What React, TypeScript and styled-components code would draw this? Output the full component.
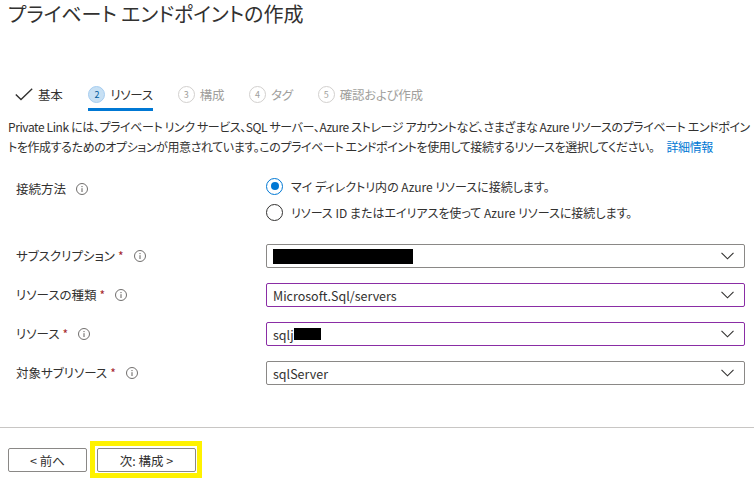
import styled, { createGlobalStyle } from "styled-components";

const GlobalStyle = createGlobalStyle`
  html, body {
    margin: 0;
    padding: 0;
    background: #ffffff;
  }
  body {
    font-family: "Noto Sans CJK JP", "Noto Sans", sans-serif;
    font-feature-settings: "palt";
    color: #323130;
  }
`;

const steps = [
  { label: "基本", done: true },
  { label: "リソース", num: 2, active: true },
  { label: "構成", num: 3 },
  { label: "タグ", num: 4 },
  { label: "確認および作成", num: 5 },
];

const InfoIcon = () => (
  <InfoStyle width="12" height="12" viewBox="0 0 12 12">
    <circle cx="6" cy="6" r="5.5" fill="none" stroke="#605e5c" strokeWidth="0.9" />
    <circle cx="6" cy="3.6" r="0.7" fill="#605e5c" />
    <line x1="6" y1="5.2" x2="6" y2="9" stroke="#605e5c" strokeWidth="1" />
  </InfoStyle>
);

const Chevron = () => (
  <svg width="13" height="8" viewBox="0 0 13 8">
    <polyline points="0.5,0.8 6.5,6.8 12.5,0.8" fill="none" stroke="#323130" strokeWidth="1.1" />
  </svg>
);

interface DropdownProps {
  label: string;
  focused?: boolean;
  children: React.ReactNode;
}

const DropdownRow = ({ label, focused, children }: DropdownProps) => (
  <FieldRow>
    <LabelStyle>
      {label}
      <Required>*</Required>
      <InfoIcon />
    </LabelStyle>
    <SelectStyle $focused={focused}>
      <SelectValue>{children}</SelectValue>
      <Chevron />
    </SelectStyle>
  </FieldRow>
);

const App = () => {
  return (
    <>
      <GlobalStyle />
      <PageStyle>
        <TitleStyle>プライベート エンドポイントの作成</TitleStyle>

        <TabsStyle>
          {steps.map((s) => (
            <TabStyle key={s.label} $active={s.active} $disabled={!s.done && !s.active}>
              {s.done ? (
                <svg width="18" height="13" viewBox="0 0 18 13">
                  <polyline points="0.8,6.5 6,11.5 17.2,0.8" fill="none" stroke="#323130" strokeWidth="1.4" />
                </svg>
              ) : (
                <StepCircle $active={s.active}>{s.num}</StepCircle>
              )}
              {s.label}
            </TabStyle>
          ))}
        </TabsStyle>

        <DescStyle>
          Private Link には、プライベート リンク サービス、SQL サーバー、Azure ストレージ アカウントなど、さまざまな Azure リソースのプライベート エンドポイン
          <br />
          トを作成するためのオプションが用意されています。このプライベート エンドポイントを使用して接続するリソースを選択してください。
          <LinkStyle href="#">詳細情報</LinkStyle>
        </DescStyle>

        <FormStyle>
          <ConnectRow>
            <LabelStyle $top>
              接続方法
              <InfoIcon />
            </LabelStyle>
            <RadioGroup>
              <RadioOption>
                <RadioCircle $checked />
                マイ ディレクトリ内の Azure リソースに接続します。
              </RadioOption>
              <RadioOption>
                <RadioCircle />
                リソース ID またはエイリアスを使って Azure リソースに接続します。
              </RadioOption>
            </RadioGroup>
          </ConnectRow>

          <DropdownRow label="サブスクリプション">
            <Redacted $w={140} />
          </DropdownRow>
          <DropdownRow label="リソースの種類" focused>
            Microsoft.Sql/servers
          </DropdownRow>
          <DropdownRow label="リソース" focused>
            sqlj<Redacted $w={27} $h={12} />
          </DropdownRow>
          <DropdownRow label="対象サブリソース">sqlServer</DropdownRow>
        </FormStyle>

        <FooterStyle>
          <ButtonStyle $w={79}>&lt; 前へ</ButtonStyle>
          <HighlightBox>
            <ButtonStyle $w={99}>次: 構成 &gt;</ButtonStyle>
          </HighlightBox>
        </FooterStyle>
      </PageStyle>
    </>
  );
};

const PageStyle = styled.div`
  width: 754px;
  height: 478px;
  overflow: hidden;
`;

const TitleStyle = styled.h1`
  margin: 0;
  padding: 0 0 0 8px;
  font-size: 20px;
  line-height: 28px;
  font-weight: 400;
  color: #323130;
`;

const TabsStyle = styled.div`
  display: flex;
  align-items: stretch;
  height: 31px;
  margin-top: 52px;
  padding-left: 15px;
`;

const TabStyle = styled.div<{ $active?: boolean; $disabled?: boolean }>`
  display: flex;
  align-items: center;
  gap: 5px;
  margin-right: 25px;
  font-size: 12.5px;
  letter-spacing: -0.3px;
  box-sizing: border-box;
  border-bottom: 3px solid ${({ $active }) => ($active ? "#0078d4" : "transparent")};
  color: ${({ $disabled }) => ($disabled ? "#a19f9d" : "#323130")};

  &:first-child {
    margin-right: 26px;
  }
`;

const StepCircle = styled.span<{ $active?: boolean }>`
  display: inline-flex;
  align-items: center;
  justify-content: center;
  width: 17px;
  height: 17px;
  box-sizing: border-box;
  border-radius: 50%;
  font-size: 9px;
  letter-spacing: 0;
  border: 1px solid ${({ $active }) => ($active ? "#a6cdf0" : "#d2d0ce")};
  background: ${({ $active }) => ($active ? "#c7e0f4" : "#ffffff")};
  color: ${({ $active }) => ($active ? "#005a9e" : "#a19f9d")};
`;

const DescStyle = styled.p`
  margin: 6px 0 0;
  padding: 0 8px;
  font-size: 12px;
  line-height: 20px;
  letter-spacing: -0.4px;
  white-space: nowrap;
  color: #323130;
`;

const LinkStyle = styled.a`
  margin-left: 12px;
  color: #0078d4;
  text-decoration: none;
`;

const FormStyle = styled.div`
  display: flex;
  flex-direction: column;
  gap: 15px;
  margin-top: 16px;
  padding: 0 9px 0 16px;
`;

const ConnectRow = styled.div`
  display: grid;
  grid-template-columns: 250px 1fr;
  margin-bottom: 4px;
`;

const FieldRow = styled.div`
  display: grid;
  grid-template-columns: 250px 1fr;
  align-items: center;
`;

const LabelStyle = styled.div<{ $top?: boolean }>`
  display: flex;
  align-items: center;
  font-size: 12.5px;
  line-height: 20px;
  padding-top: ${({ $top }) => ($top ? "6px" : "0")};
  align-self: ${({ $top }) => ($top ? "start" : "center")};
`;

const Required = styled.span`
  color: #a4262c;
  margin-left: 3px;
  font-size: 12px;
`;

const InfoStyle = styled.svg`
  margin-left: 10px;
`;

const RadioGroup = styled.div`
  display: flex;
  flex-direction: column;
`;

const RadioOption = styled.label`
  display: flex;
  align-items: center;
  gap: 8px;
  height: 26px;
  font-size: 12px;
`;

const RadioCircle = styled.span<{ $checked?: boolean }>`
  position: relative;
  width: 17px;
  height: 17px;
  box-sizing: border-box;
  border-radius: 50%;
  border: 1px solid ${({ $checked }) => ($checked ? "#0078d4" : "#323130")};

  &::after {
    content: "";
    display: ${({ $checked }) => ($checked ? "block" : "none")};
    position: absolute;
    left: 3.5px;
    top: 3.5px;
    width: 8px;
    height: 8px;
    border-radius: 50%;
    background: #0078d4;
  }
`;

const SelectStyle = styled.div<{ $focused?: boolean }>`
  display: flex;
  align-items: center;
  justify-content: space-between;
  height: 24px;
  box-sizing: border-box;
  padding: 0 10px 0 6px;
  border: 1px solid ${({ $focused }) => ($focused ? "#8a2da5" : "#8a8886")};
  border-radius: 2px;
  font-size: 12.5px;
  color: #323130;
`;

const SelectValue = styled.span`
  display: flex;
  align-items: center;
`;

const Redacted = styled.span<{ $w: number; $h?: number }>`
  display: inline-block;
  width: ${({ $w }) => $w}px;
  height: ${({ $h }) => $h ?? 15}px;
  background: #000000;
`;

const FooterStyle = styled.div`
  display: flex;
  align-items: flex-start;
  gap: 3px;
  margin-top: 42px;
  padding: 20px 8px 0;
  border-top: 1px solid #c8c6c4;
`;

const HighlightBox = styled.div`
  display: flex;
  margin-top: -7px;
  padding: 2px 1px 1px 2px;
  border: 5px solid #fff200;
`;

const ButtonStyle = styled.button<{ $w: number }>`
  width: ${({ $w }) => $w}px;
  height: 24px;
  box-sizing: border-box;
  border: 1px solid #8a8886;
  border-radius: 2px;
  background: #ffffff;
  color: #323130;
  font-family: "Noto Sans CJK JP", "Noto Sans", sans-serif;
  font-feature-settings: "palt";
  font-size: 12.5px;
  padding: 0;
`;

export default App;
